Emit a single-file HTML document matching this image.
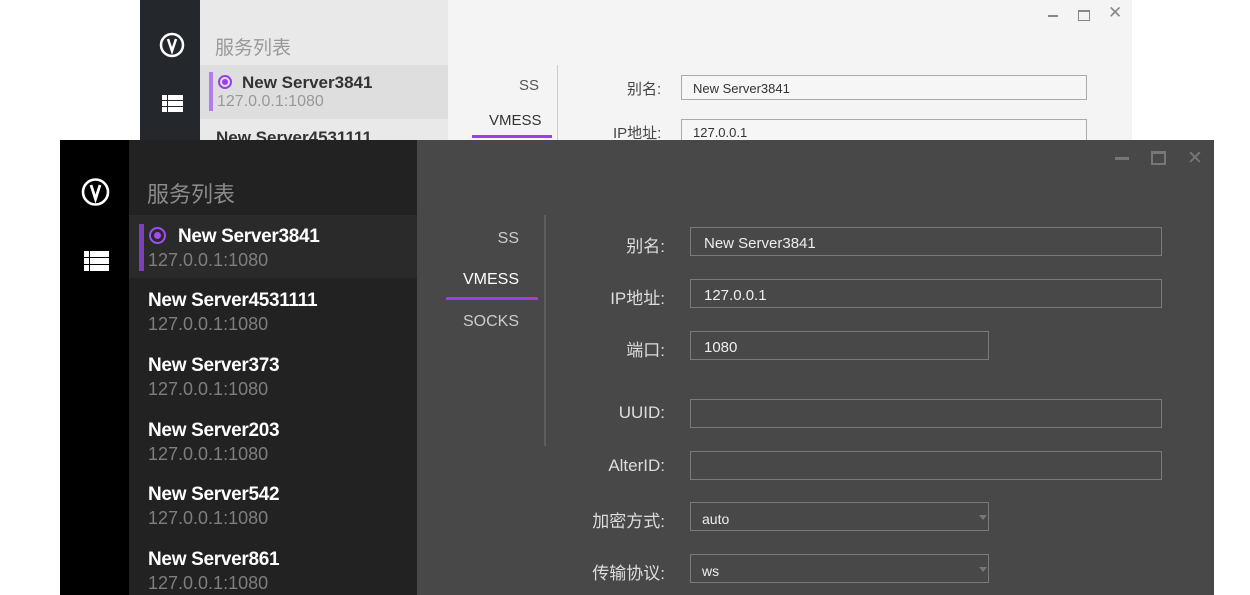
<!DOCTYPE html>
<html><head><meta charset="utf-8"><style>
*{margin:0;padding:0;box-sizing:border-box}
body{width:1250px;height:595px;background:#fff;position:relative;overflow:hidden;font-family:"Liberation Sans","Noto Sans CJK SC",sans-serif}
.a{position:absolute;white-space:nowrap}
.lbl{position:absolute;text-align:right;width:120px;font-size:17px;color:#ddd}
.inp{position:absolute;border:1px solid #7a7a7a;height:29px;color:#eee;font-size:15px;padding:6px 0 0 13px}
.nm{position:absolute;left:148px;font-weight:bold;font-size:19px;color:#fff;letter-spacing:-0.3px}
.ad{position:absolute;left:148px;font-size:18px;color:#7e7e7e}
</style></head><body>
<!-- back window -->
<div class="a" style="left:140px;top:0;width:60px;height:140px;background:#24272b"></div>
<div class="a" style="left:200px;top:0;width:248px;height:140px;background:#e9e9e9"></div>
<div class="a" style="left:448px;top:0;width:684px;height:140px;background:#f4f4f4"></div>
<svg class="a" style="left:140px;top:0" width="60" height="140"><circle cx="32" cy="45" r="11" fill="none" stroke="#fff" stroke-width="2.5"/><path d="M28 39 L32 51 L36 39" fill="none" stroke="#fff" stroke-width="2.5"/><g fill="#fff"><rect x="22" y="95" width="5" height="5"/><rect x="28" y="95" width="15" height="5"/><rect x="22" y="101" width="5" height="5"/><rect x="28" y="101" width="15" height="5"/><rect x="22" y="107" width="5" height="5"/><rect x="28" y="107" width="15" height="5"/></g></svg>
<div class="a" style="left:215px;top:33px;font-size:19px;color:#999">服务列表</div>
<div class="a" style="left:200px;top:65px;width:248px;height:54px;background:#dedede"></div>
<div class="a" style="left:209px;top:72px;width:4px;height:39px;background:#b27cf0"></div>
<div class="a" style="left:218px;top:75px;width:14px;height:14px;border:2px solid #9b3ee8;border-radius:50%"></div>
<div class="a" style="left:222px;top:79px;width:6px;height:6px;background:#9b3ee8;border-radius:50%"></div>
<div class="a" style="left:242px;top:73px;font-weight:bold;font-size:17px;color:#333">New Server3841</div>
<div class="a" style="left:217px;top:93px;font-size:16px;color:#999">127.0.0.1:1080</div>
<div class="a" style="left:216px;top:128px;font-weight:bold;font-size:17px;color:#333">New Server4531111</div>
<div class="a" style="left:519px;top:77px;font-size:15px;color:#555">SS</div>
<div class="a" style="left:489px;top:112px;font-size:15px;color:#333">VMESS</div>
<div class="a" style="left:472px;top:135px;width:80px;height:3px;background:#9b3ee8"></div>
<div class="a" style="left:557px;top:65px;width:1px;height:75px;background:#ccc"></div>
<div class="a" style="left:627px;top:78px;font-size:15px;color:#444">别名:</div>
<div class="a" style="left:681px;top:75px;width:406px;height:25px;border:1px solid #aaa;background:#f6f6f6;font-size:13px;color:#333;padding:5px 0 0 11px">New Server3841</div>
<div class="a" style="left:613px;top:122px;font-size:15px;color:#444">IP地址:</div>
<div class="a" style="left:681px;top:119px;width:406px;height:25px;border:1px solid #aaa;background:#f6f6f6;font-size:13px;color:#333;padding:5px 0 0 11px">127.0.0.1</div>
<div class="a" style="left:1048px;top:15px;width:10px;height:2px;background:#888"></div>
<div class="a" style="left:1078px;top:10px;width:12px;height:11px;border:1px solid #888;border-top-width:2px"></div>
<div class="a" style="left:1108px;top:3px;font-size:17px;color:#888">✕</div>
<!-- front window -->
<div class="a" style="left:60px;top:140px;width:69px;height:455px;background:#000"></div>
<div class="a" style="left:129px;top:140px;width:288px;height:455px;background:#222"></div>
<div class="a" style="left:417px;top:140px;width:797px;height:455px;background:#484848"></div>
<svg class="a" style="left:60px;top:140px" width="69" height="150"><circle cx="35.5" cy="52" r="12.5" fill="none" stroke="#fff" stroke-width="2.6"/><path d="M31 45 L35.5 59 L40 45" fill="none" stroke="#fff" stroke-width="2.8"/><g fill="#fff"><rect x="24" y="111" width="5" height="6"/><rect x="30" y="111" width="19" height="6"/><rect x="24" y="118" width="5" height="6"/><rect x="30" y="118" width="19" height="6"/><rect x="24" y="125" width="5" height="6"/><rect x="30" y="125" width="19" height="6"/></g></svg>
<div class="a" style="left:147px;top:177px;font-size:22px;color:#8a8a8a">服务列表</div>
<div class="a" style="left:129px;top:215px;width:288px;height:63px;background:#2a2a2a"></div>
<div class="a" style="left:139px;top:224px;width:5px;height:47px;background:#7b3fb8"></div>
<div class="a" style="left:149px;top:227px;width:17px;height:17px;border:2px solid #a24df0;border-radius:50%"></div>
<div class="a" style="left:154px;top:232px;width:7px;height:7px;background:#a24df0;border-radius:50%"></div>
<div class="a" style="left:178px;top:226px;font-weight:bold;font-size:19px;color:#fff;letter-spacing:-0.3px">New Server3841</div>
<div class="ad" style="top:250px">127.0.0.1:1080</div>
<div class="nm" style="top:290px">New Server4531111</div><div class="ad" style="top:314px">127.0.0.1:1080</div>
<div class="nm" style="top:355px">New Server373</div><div class="ad" style="top:379px">127.0.0.1:1080</div>
<div class="nm" style="top:420px">New Server203</div><div class="ad" style="top:444px">127.0.0.1:1080</div>
<div class="nm" style="top:484px">New Server542</div><div class="ad" style="top:508px">127.0.0.1:1080</div>
<div class="nm" style="top:549px">New Server861</div><div class="ad" style="top:573px">127.0.0.1:1080</div>
<div class="a" style="left:420px;top:230px;width:99px;text-align:right;font-size:16px;color:#ccc">SS</div>
<div class="a" style="left:420px;top:271px;width:99px;text-align:right;font-size:16px;color:#fff">VMESS</div>
<div class="a" style="left:446px;top:297px;width:92px;height:3px;background:#9b3ee8"></div>
<div class="a" style="left:420px;top:313px;width:99px;text-align:right;font-size:16px;color:#ccc">SOCKS</div>
<div class="a" style="left:544px;top:215px;width:2px;height:231px;background:#5e5e5e"></div>
<div class="lbl" style="left:545px;top:232px">别名:</div>
<div class="inp" style="left:690px;top:227px;width:472px;padding-top:7px">New Server3841</div>
<div class="lbl" style="left:545px;top:284px">IP地址:</div>
<div class="inp" style="left:690px;top:279px;width:472px;padding-top:7px">127.0.0.1</div>
<div class="lbl" style="left:545px;top:336px">端口:</div>
<div class="inp" style="left:690px;top:331px;width:299px;padding-top:7px">1080</div>
<div class="lbl" style="left:545px;top:403px">UUID:</div>
<div class="inp" style="left:690px;top:399px;width:472px"></div>
<div class="lbl" style="left:545px;top:456px">AlterID:</div>
<div class="inp" style="left:690px;top:451px;width:472px"></div>
<div class="lbl" style="left:545px;top:507px">加密方式:</div>
<div class="inp" style="left:690px;top:502px;width:299px;font-size:14px;padding:8px 0 0 11px">auto</div>
<div class="a" style="left:979px;top:515px;border:4px solid transparent;border-top:5px solid #777"></div>
<div class="lbl" style="left:545px;top:559px">传输协议:</div>
<div class="inp" style="left:690px;top:554px;width:299px;font-size:14px;padding:8px 0 0 11px">ws</div>
<div class="a" style="left:979px;top:567px;border:4px solid transparent;border-top:5px solid #777"></div>
<div class="a" style="left:1115px;top:157px;width:14px;height:3px;background:#777"></div>
<div class="a" style="left:1151px;top:151px;width:15px;height:14px;border:2px solid #777;border-top-width:3px"></div>
<div class="a" style="left:1187px;top:147px;font-size:19px;color:#777">✕</div>
</body></html>
